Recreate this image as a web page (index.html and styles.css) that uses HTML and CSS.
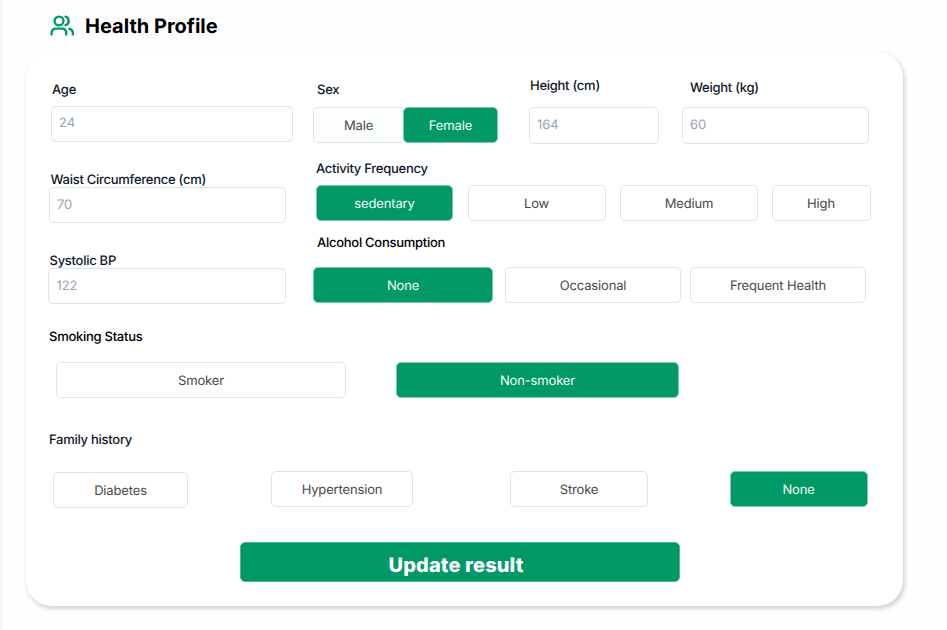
FILE: index.html
```html
<!DOCTYPE html>
<html lang="en">
<head>
<meta charset="utf-8">
<title>Health Profile</title>
<link rel="stylesheet" href="styles.css">
</head>
<body>
<main class="page">
  <header class="header">
    <svg class="header-icon" viewBox="0 0 25 22" fill="none" stroke="currentColor" stroke-width="2.4" stroke-linecap="round" stroke-linejoin="round">
      <circle cx="9" cy="6" r="4.4"/>
      <path d="M1.6 19.4v-1.6c0-2.8 1.9-4.2 4.6-4.2h5.4c2.7 0 4.6 1.4 4.6 4.2v1.6"/>
      <path d="M15.6 1.7a4.4 4.4 0 0 1 0 8.4"/>
      <path d="M19.4 13.8c2.2.6 3.4 2 3.4 4v1.6"/>
    </svg>
    <h1 class="title">Health Profile</h1>
  </header>
  <form class="card">
    <div class="top">
      <div class="measures">
        <div class="field age"><label class="label">Age</label><input class="input" placeholder="24"></div>
        <div class="field waist"><label class="label">Waist Circumference (cm)</label><input class="input" placeholder="70"></div>
        <div class="field systolic"><label class="label">Systolic BP</label><input class="input" placeholder="122"></div>
      </div>
      <div class="details">
        <div class="basics">
          <div class="field sex">
            <span class="label">Sex</span>
            <div class="options"><button type="button" class="option male">Male</button><button type="button" class="option selected female">Female</button></div>
          </div>
          <div class="field height"><label class="label">Height (cm)</label><input class="input" placeholder="164"></div>
          <div class="field weight"><label class="label">Weight (kg)</label><input class="input" placeholder="60"></div>
        </div>
        <div class="field activity">
          <span class="label">Activity Frequency</span>
          <div class="options"><button type="button" class="option selected">sedentary</button><button type="button" class="option">Low</button><button type="button" class="option">Medium</button><button type="button" class="option high">High</button></div>
        </div>
        <div class="field alcohol">
          <span class="label dark">Alcohol Consumption</span>
          <div class="options"><button type="button" class="option selected">None</button><button type="button" class="option">Occasional</button><button type="button" class="option frequent">Frequent Health</button></div>
        </div>
      </div>
    </div>
    <div class="field smoking">
      <span class="label dark">Smoking Status</span>
      <div class="options"><button type="button" class="option">Smoker</button><button type="button" class="option selected">Non-smoker</button></div>
    </div>
    <div class="field family">
      <span class="label">Family history</span>
      <div class="options"><button type="button" class="option diabetes">Diabetes</button><button type="button" class="option hypertension">Hypertension</button><button type="button" class="option stroke">Stroke</button><button type="button" class="option selected">None</button></div>
    </div>
    <button type="button" class="submit">Update result</button>
  </form>
</main>
</body>
</html>
```
FILE: styles.css
```css
* { box-sizing: border-box; }

body {
  margin: 0;
  background: #fefefe;
  font-family: Inter, "Liberation Sans", sans-serif;
  text-rendering: geometricPrecision;
}

button, input { text-rendering: inherit; }

.page {
  height: 630px;
  border-left: 3px solid #f5f5f5;
  padding: 14px 0 0 23px;
  overflow: hidden;
}

.header {
  display: flex;
  height: 38px;
  padding-left: 24px;
  gap: 10px;
  color: #009966;
}

.header-icon { width: 25px; height: 22px; margin-top: 1px; }

.title {
  margin: 0;
  font-size: 20px;
  line-height: 24px;
  font-weight: 700;
  color: #000;
}

.card {
  display: flex;
  flex-direction: column;
  width: 877px;
  height: 554px;
  border-radius: 26px;
  background: #fff;
  box-shadow: 1.5px 2.5px 4px rgba(0, 0, 0, 0.17);
}

.top { display: flex; padding: 25px 0 0 22px; }
.measures { width: 265px; padding-top: 4px; }
.field { display: flex; flex-direction: column; }

.label {
  margin-bottom: -2px;
  font-size: 13px;
  line-height: 18px;
  font-weight: 500;
  letter-spacing: -0.27px;
  color: #0f172a;
  white-space: nowrap;
}

.label.dark { color: #000; }

.input {
  width: 100%;
  height: 36px;
  padding: 0 8px 0 7px;
  border: 1px solid #dee4ed;
  border-radius: 5px;
  background: #fff;
  font: 400 13px/16px Inter, sans-serif;
  letter-spacing: -0.1px;
}

.input::placeholder { color: #94a3b8; opacity: 1; }

.options { display: grid; }

.option {
  height: 36px;
  padding: 2px 0 0;
  border: 1px solid #dee4ed;
  border-radius: 5px;
  background: #fff;
  color: #484848;
  font: 370 13px/16px Inter, sans-serif;
  letter-spacing: -0.15px;
}

.option.selected {
  border-color: #7fcbb1;
  background: #009966;
  color: #f0fff8;
}

.age { width: 242px; margin-left: 3px; gap: 9px; }
.waist { width: 237px; margin: 29px 0 0 1px; }
.systolic { width: 238px; margin-top: 29px; }
.age .label { padding-left: 1px; }
.age .input { padding-bottom: 3px; }
.waist .label, .systolic .label { padding-left: 1.5px; }
.systolic .input { padding-left: 7.5px; }

.basics { display: flex; align-items: flex-start; }
.sex { padding-top: 4px; gap: 10px; }
.sex .label { padding-left: 4px; }
.sex .options { grid-template-columns: 90px 95px; }
.male { border-radius: 5px 0 0 5px; background: #fcfefe; border-right: 0; }
.height { width: 130px; margin-left: 31px; gap: 14px; }
.height .label { padding-left: 1px; }
.weight { width: 187px; padding-top: 2px; margin-left: 23px; gap: 12px; }
.weight .label { padding-left: 8px; }
.height .input, .weight .input { height: 37px; padding-bottom: 1px; }

.activity { margin: 16px 0 0 3px; gap: 9px; }
.activity .options { grid-template-columns: 137px 138px 138px 99px; column-gap: 14.5px; }
.high { margin: 0 1px 0 -1px; }
.alcohol { margin-top: 13px; gap: 17px; }
.alcohol .label { padding-left: 4px; }
.alcohol .options { grid-template-columns: 180px 176px 176px; column-gap: 12px; }
.frequent { margin: 0 3px 0 -3px; }

.smoking { margin: 24px 0 0 23px; gap: 18px; }
.smoking .options { grid-template-columns: 290px 283px; column-gap: 50px; padding-left: 7px; }

.family { margin: 33px 35px 0 23px; gap: 24px; }
.family .options { grid-template-columns: 218px 239px 219.5px 138px; padding-left: 4px; }
.diabetes { width: 135px; margin-top: 1px; }
.hypertension { width: 142px; }
.stroke { width: 138px; }

.submit {
  width: 440px;
  height: 40px;
  margin: 34px 0 0 214px;
  padding: 5px 0 0;
  border: 1px solid #50b894;
  border-radius: 5px;
  background: #009966;
  color: #fff;
  font: 850 20px/24px Inter, sans-serif;
  letter-spacing: 0.12px;
  text-indent: -8px;
}
```
